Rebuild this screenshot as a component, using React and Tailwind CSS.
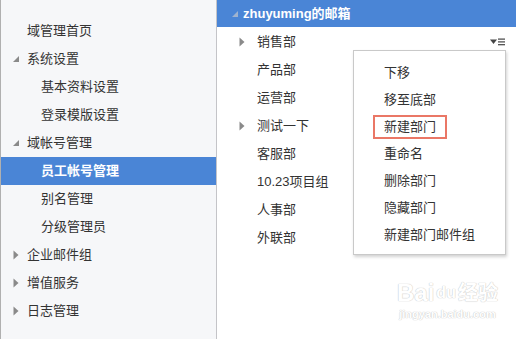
import React from 'react';

const FONT = { fontFamily: '"Liberation Sans", "Noto Sans CJK SC", sans-serif' };

function Open({ className = 'text-[#8a8a8a]' }) {
  return (
    <svg width="8" height="8" viewBox="0 0 8 8" className={className}>
      <path d="M7 1 L7 7 L1 7 Z" fill="currentColor" />
    </svg>
  );
}

function Closed() {
  return (
    <svg width="6" height="10" viewBox="0 0 6 10" className="text-[#8a8a8a]">
      <path d="M0.5 0.5 L5.5 5 L0.5 9.5 Z" fill="currentColor" />
    </svg>
  );
}

const nav = [
  { label: '域管理首页', level: 0 },
  { label: '系统设置', level: 0, icon: 'open' },
  { label: '基本资料设置', level: 1 },
  { label: '登录模版设置', level: 1 },
  { label: '域帐号管理', level: 0, icon: 'open' },
  { label: '员工帐号管理', level: 1, active: true },
  { label: '别名管理', level: 1 },
  { label: '分级管理员', level: 1 },
  { label: '企业邮件组', level: 0, icon: 'closed' },
  { label: '增值服务', level: 0, icon: 'closed' },
  { label: '日志管理', level: 0, icon: 'closed' },
];

const depts = [
  { label: '销售部', sub: true },
  { label: '产品部' },
  { label: '运营部' },
  { label: '测试一下', sub: true },
  { label: '客服部' },
  { label: '10.23项目组' },
  { label: '人事部' },
  { label: '外联部' },
];

const menu = ['下移', '移至底部', '新建部门', '重命名', '删除部门', '隐藏部门', '新建部门邮件组'];

export default function App() {
  return (
    <div style={FONT} className="relative flex h-[339px] w-[516px] overflow-hidden bg-white text-[13px] text-[#333]">
      {/* sidebar */}
      <div className="w-[217px] shrink-0 border-r border-l border-r-[#c4c4c8] border-l-[#b0b0b0] bg-[#f6f7f9] pt-[17px]">
        {nav.map((n) => (
          <div
            key={n.label}
            className={
              'flex h-[28px] items-center ' +
              (n.active ? 'bg-[#4a85d6] font-bold text-white' : '')
            }
          >
            <span className="flex w-[26px] justify-center pl-[3px]">
              {n.icon === 'open' && <Open />}
              {n.icon === 'closed' && <Closed />}
            </span>
            <span className={n.level === 1 ? 'pl-[14px]' : ''}>{n.label}</span>
          </div>
        ))}
      </div>

      {/* main */}
      <div className="relative flex-1">
        <div className="flex h-[27px] items-center bg-[#4a85d6] font-bold text-white">
          <span className="flex w-[25px] justify-end pr-[3px]">
            <Open className="text-[#9fb3cf]" />
          </span>
          <span className="pl-[1px]">zhuyuming的邮箱</span>
        </div>
        <div className="pt-[1px]">
          {depts.map((d, i) => (
            <div key={d.label} className="flex h-[28px] items-center">
              <span className="flex w-[33px] justify-end pr-[5px]">{d.sub && <Closed />}</span>
              <span className="pl-[7px]">{d.label}</span>
              {i === 0 && (
                <svg width="16" height="8" viewBox="0 0 16 8" className="ml-auto mr-[10px] text-[#444]">
                  <path d="M0 1.5 L7 1.5 L3.5 6 Z" fill="currentColor" />
                  <rect x="8" y="0.5" width="7" height="1.2" fill="currentColor" />
                  <rect x="8" y="3.3" width="7" height="1.2" fill="currentColor" />
                  <rect x="8" y="6.1" width="7" height="1.2" fill="currentColor" />
                </svg>
              )}
            </div>
          ))}
        </div>

        {/* context menu */}
        <div className="absolute top-[50px] left-[136px] w-[153px] border border-[#c9c9c9] bg-white pt-[8px] pb-[6px] shadow-[1px_2px_3px_rgba(0,0,0,0.18)]">
          {menu.map((m) => (
            <div key={m} className="flex h-[27px] items-center pl-[30px]">
              {m === '新建部门' ? (
                <span className="-ml-[11px] flex h-[24px] items-center border-2 border-[#ea7766] px-[9px]">{m}</span>
              ) : (
                m
              )}
            </div>
          ))}
        </div>

        {/* watermark */}
        <div className="pointer-events-none absolute top-[281px] left-[180px] flex flex-col items-center text-[#fff] [text-shadow:0_0_1px_#c8c8c8,0_0_1px_#c8c8c8]">
          <div className="flex items-center gap-[2px] text-[24px] leading-none font-bold">
            <span>Bai</span>
            <span className="text-[16px]">du</span>
            <span className="text-[20px]">经验</span>
          </div>
          <div className="mt-[4px] text-[11px] leading-none font-bold">jingyan.baidu.com</div>
        </div>
      </div>
    </div>
  );
}
